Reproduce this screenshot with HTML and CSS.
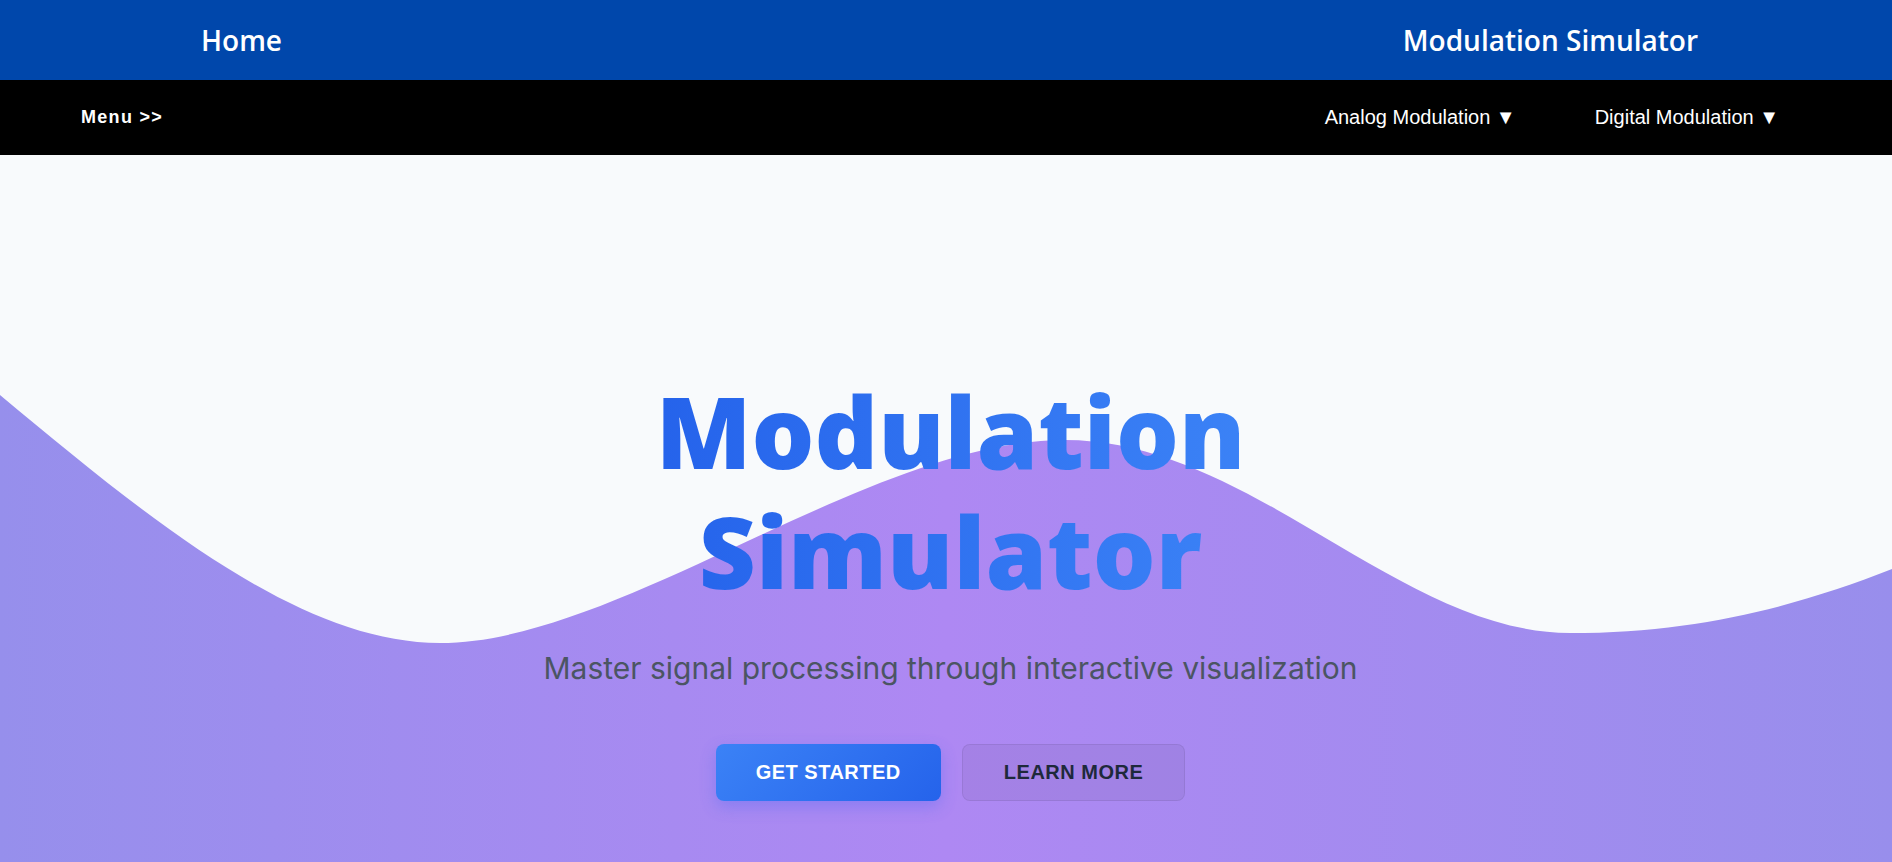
FILE: index.html
```html
<!DOCTYPE html>
<html lang="en">
<head>
<meta charset="utf-8">
<title>Modulation Simulator</title>
<link rel="stylesheet" href="styles.css">
</head>
<body>
<header class="topbar">
  <a class="topbar-home" href="#">Home</a>
  <span class="topbar-brand">Modulation Simulator</span>
</header>
<nav class="menubar">
  <span class="menu-toggle">Menu &gt;&gt;</span>
  <ul class="menu-links">
    <li class="menu-item">Analog Modulation &#9660;</li>
    <li class="menu-item">Digital Modulation &#9660;</li>
  </ul>
</nav>
<section class="hero">
  <svg class="hero-wave" viewBox="0 0 1892 862" preserveAspectRatio="none" aria-hidden="true">
    <defs>
      <linearGradient id="waveGrad" x1="0" y1="0" x2="1" y2="0">
        <stop offset="0" stop-color="#968fec"/>
        <stop offset="0.5" stop-color="#ae88f3"/>
        <stop offset="1" stop-color="#988eec"/>
      </linearGradient>
    </defs>
    <path d="M0,240 C150,365 300,488 440,488 C620,488 870,285 1065,285 C1250,285 1400,478 1570,478 C1700,478 1800,450 1892,414 L1892,862 L0,862 Z" fill="url(#waveGrad)"/>
  </svg>
  <div class="hero-content">
    <h1 class="hero-title">Modulation<br>Simulator</h1>
    <p class="hero-sub">Master signal processing through interactive visualization</p>
    <div class="hero-actions">
      <a class="btn btn-primary" href="#">GET STARTED</a>
      <a class="btn btn-ghost" href="#">LEARN MORE</a>
    </div>
  </div>
</section>
</body>
</html>
```
FILE: styles.css
```css
* { box-sizing: border-box; }

body {
  margin: 0;
  font-family: "Liberation Sans", Arial, sans-serif;
  background: #f8fafc;
}

.topbar {
  height: 80px;
  background: #0047ab;
  display: flex;
  align-items: center;
  justify-content: space-between;
  padding: 0 194px 0 201px;
}

.topbar-home,
.topbar-brand {
  font-family: "Open Sans", sans-serif;
  font-weight: 600;
  font-size: 28px;
  color: #ffffff;
  text-decoration: none;
}

.menubar {
  height: 75px;
  background: #000000;
  display: flex;
  align-items: center;
  justify-content: space-between;
  padding: 0 113px 0 81px;
}

.menu-toggle {
  color: #ffffff;
  font-weight: 700;
  font-size: 18px;
  letter-spacing: 1.3px;
}

.menu-links {
  list-style: none;
  margin: 0;
  padding: 0;
  display: flex;
  gap: 79px;
}

.menu-item {
  color: #ffffff;
  font-size: 20px;
}

.hero {
  position: relative;
  min-height: 100vh;
  display: flex;
  align-items: center;
  justify-content: center;
  padding-left: 9px;
  background: #f8fafc;
  overflow: hidden;
}

.hero-wave {
  position: absolute;
  left: 0;
  top: 0;
  width: 100%;
  height: 100%;
  display: block;
}

.hero-content {
  position: relative;
  z-index: 1;
  display: flex;
  flex-direction: column;
  align-items: center;
  text-align: center;
}

.hero-title {
  margin: 0 0 35px;
  font-family: "Open Sans", sans-serif;
  font-weight: 800;
  font-size: 99px;
  line-height: 120px;
  letter-spacing: 0;
  background: linear-gradient(90deg, #2563eb, #3b82f6);
  -webkit-background-clip: text;
  background-clip: text;
  color: transparent;
}

.hero-sub {
  margin: 0 0 54px;
  font-family: "Inter", sans-serif;
  font-size: 30px;
  line-height: 44px;
  color: #4b5563;
}

.hero-actions {
  display: flex;
  gap: 21px;
}

.btn {
  display: inline-block;
  height: 57px;
  line-height: 57px;
  font-family: "Liberation Sans", Arial, sans-serif;
  font-weight: 700;
  font-size: 20px;
  letter-spacing: 0.5px;
  text-decoration: none;
  border-radius: 8px;
}

.btn-primary {
  padding: 0 40px;
  color: #ffffff;
  background: linear-gradient(135deg, #3b82f6, #2563eb);
  box-shadow: 0 6px 16px rgba(59, 100, 246, 0.3);
}

.btn-ghost {
  padding: 0 41px;
  line-height: 55px;
  color: #1e293b;
  background: rgba(0, 0, 0, 0.05);
  border: 1px solid rgba(0, 0, 0, 0.07);
}
```
